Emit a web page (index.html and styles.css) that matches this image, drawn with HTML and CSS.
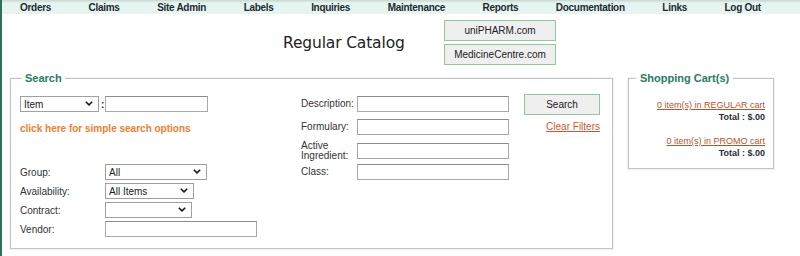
FILE: index.html
```html
<!DOCTYPE html>
<html lang="en">
<head>
    <meta charset="UTF-8">
    <title>Regular Catalog</title>
    <link rel="stylesheet" href="styles.css">
</head>
<body>
    <div class="topnav">
        <a href="#">Orders</a>
        <a href="#">Claims</a>
        <a href="#">Site Admin</a>
        <a href="#">Labels</a>
        <a href="#">Inquiries</a>
        <a href="#">Maintenance</a>
        <a href="#">Reports</a>
        <a href="#">Documentation</a>
        <a href="#">Links</a>
        <a href="#">Log Out</a>
    </div>

    <div class="header">
        <h1 class="title">Regular Catalog</h1>
        <div class="site-links">
            <button class="btn">uniPHARM.com</button>
            <button class="btn">MedicineCentre.com</button>
        </div>
    </div>

    <div class="main">
        <fieldset class="box search-box">
            <legend>Search</legend>
            <div class="search-grid">
                <div class="col-left">
                    <div class="item-row">
                        <span class="select-wrap sel-item">
                            <select><option>Item</option></select>
                            <svg class="chev" viewBox="0 0 8 5"><path d="M0.8 0.8 L4 3.9 L7.2 0.8"/></svg>
                        </span>
                        <span class="colon">:</span>
                        <input type="text" class="inp-item">
                    </div>
                    <a href="#" class="simple-link">click here for simple search options</a>

                    <div class="filters">
                        <label>Group:</label>
                        <span class="select-wrap sel-group">
                            <select><option>All</option></select>
                            <svg class="chev" viewBox="0 0 8 5"><path d="M0.8 0.8 L4 3.9 L7.2 0.8"/></svg>
                        </span>
                        <label>Availability:</label>
                        <span class="select-wrap sel-avail">
                            <select><option>All Items</option></select>
                            <svg class="chev" viewBox="0 0 8 5"><path d="M0.8 0.8 L4 3.9 L7.2 0.8"/></svg>
                        </span>
                        <label>Contract:</label>
                        <span class="select-wrap sel-contract">
                            <select><option></option></select>
                            <svg class="chev" viewBox="0 0 8 5"><path d="M0.8 0.8 L4 3.9 L7.2 0.8"/></svg>
                        </span>
                        <label>Vendor:</label>
                        <input type="text" class="inp-vendor">
                    </div>
                </div>

                <div class="col-mid">
                    <label>Description:</label>
                    <input type="text">
                    <label>Formulary:</label>
                    <input type="text">
                    <label class="two-line">Active Ingredient:</label>
                    <input type="text" class="inp-active">
                    <label>Class:</label>
                    <input type="text">
                </div>

                <div class="col-right">
                    <button class="btn search-btn">Search</button>
                    <a href="#" class="clear-link">Clear Filters</a>
                </div>
            </div>
        </fieldset>

        <fieldset class="box cart-box">
            <legend>Shopping Cart(s)</legend>
            <div class="cart">
                <a href="#">0 item(s) in REGULAR cart</a>
                <div class="total">Total : $.00</div>
            </div>
            <div class="cart">
                <a href="#">0 item(s) in PROMO cart</a>
                <div class="total">Total : $.00</div>
            </div>
        </fieldset>
    </div>
</body>
</html>
```

FILE: styles.css
```css
* {
    margin: 0;
    padding: 0;
    box-sizing: border-box;
}

body {
    font-family: 'Liberation Sans', Arial, sans-serif;
    font-size: 10px;
    color: #222;
    background: white;
    border-left: 2px solid #2d6f5c;
    min-height: 100vh;
}

.topnav {
    display: flex;
    gap: 37.6px;
    height: 14px;
    padding-left: 18px;
    background: linear-gradient(#c9d6d2 0px, #e6f5f0 3px);
    align-items: center;
}

.topnav a {
    color: #1e2a33;
    font-weight: bold;
    font-size: 10px;
    letter-spacing: -0.3px;
    text-decoration: none;
    line-height: 14px;
    padding-top: 1px;
}

.header {
    display: flex;
    align-items: center;
    padding: 6px 0 7px 281px;
}

.title {
    width: 161px;
    font-family: 'DejaVu Sans', Verdana, sans-serif;
    font-weight: normal;
    font-size: 15.5px;
    color: #222;
    letter-spacing: -0.15px;
}

.site-links {
    display: flex;
    flex-direction: column;
    gap: 3px;
}

.btn {
    background: #efefef;
    border: 1px solid #94c59e;
    font-family: 'Liberation Sans', Arial, sans-serif;
    font-size: 10px;
    color: #222;
    width: 112px;
    height: 21px;
    cursor: pointer;
}

.main {
    display: flex;
    gap: 15px;
    padding-left: 8px;
}

.box {
    border: 1px solid #c4c4c4;
    box-shadow: 0 0 0 0.5px #e4e4e4;
}

.box legend {
    color: #2a7b69;
    font-weight: bold;
    font-size: 11px;
    line-height: 13px;
}

.search-box {
    width: 603px;
    height: 177px;
    padding: 9px 9px 0;
}

.search-box legend {
    margin-left: 2px;
    padding: 0 3px;
}

.search-grid {
    display: grid;
    grid-template-columns: 281px 223px 76px;
}

input[type=text] {
    height: 16px;
    border: 1px solid #a8a8a8;
    border-top-color: #8c8c8c;
    background: white;
    font-size: 10px;
}

.select-wrap {
    position: relative;
    display: inline-block;
    height: 16px;
}

.select-wrap select {
    appearance: none;
    width: 100%;
    height: 16px;
    border: 1px solid #a0a0a0;
    background: white;
    font-family: 'Liberation Sans', Arial, sans-serif;
    font-size: 10px;
    color: #222;
    padding-left: 3px;
}

.chev {
    position: absolute;
    right: 6px;
    top: 5px;
    width: 8px;
    height: 5px;
    fill: none;
    stroke: #1a1a1a;
    stroke-width: 1.6;
    pointer-events: none;
}

.col-left {
    padding-top: 2px;
}

.item-row {
    display: flex;
    align-items: center;
    height: 16px;
}

.sel-item { width: 79px; }

.colon {
    width: 6px;
    padding-left: 2px;
    font-weight: bold;
}

.inp-item { width: 103px; }

.simple-link {
    display: block;
    margin-top: 11px;
    color: #ea7f31;
    font-weight: bold;
    text-decoration: none;
    line-height: 12px;
}

.filters {
    display: grid;
    grid-template-columns: 85px auto;
    row-gap: 3px;
    margin-top: 29px;
    justify-items: start;
    align-items: center;
}

.filters label { color: #333; }

.sel-group { width: 102px; }
.sel-avail { width: 89px; }
.sel-contract { width: 87px; }
.inp-vendor { width: 152px; }

.col-mid {
    display: grid;
    grid-template-columns: 56px 152px;
    grid-template-rows: 23px 22px 23px auto;
    align-items: start;
    padding-top: 2px;
}

.col-mid label {
    line-height: 16px;
    color: #333;
}

.col-mid input { width: 152px; }

.col-mid .two-line {
    line-height: 10px;
    margin-top: 0;
    width: 50px;
}

.col-mid .inp-active { margin-top: 2px; }

.col-right {
    display: flex;
    flex-direction: column;
    align-items: flex-end;
}

.search-btn {
    width: 76px;
    height: 21px;
}

.clear-link {
    margin-top: 6px;
    color: #c65a31;
    text-decoration: underline;
    line-height: 12px;
}

.cart-box {
    width: 146px;
    height: 97px;
    padding: 15px 8px 0;
}

.cart-box legend {
    margin-left: -1px;
    padding: 0 4px;
}

.cart {
    text-align: right;
    font-size: 9px;
    line-height: 11px;
}

.cart + .cart { margin-top: 13px; }

.cart a {
    color: #b4552f;
    text-decoration: underline;
}

.total {
    font-weight: bold;
    color: #1f2c3a;
    margin-top: 1px;
}
```
